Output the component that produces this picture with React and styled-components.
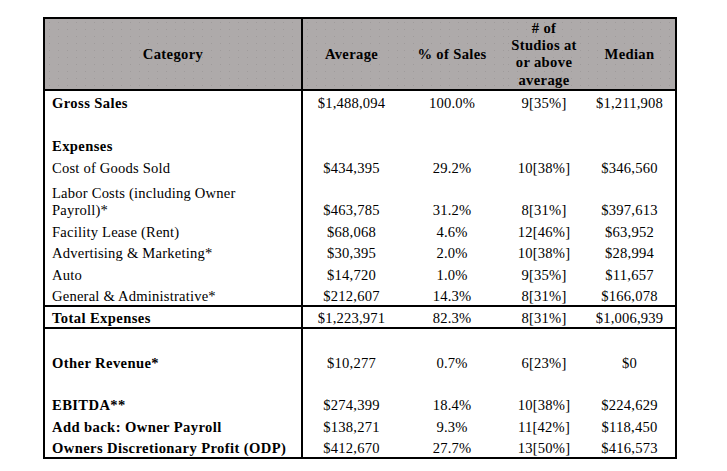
import styled, { createGlobalStyle } from "styled-components";

const GlobalStyle = createGlobalStyle`
  html, body {
    margin: 0;
    padding: 0;
    background: #ffffff;
  }
  body {
    font-family: "Liberation Serif", "Times New Roman", serif;
    color: #000000;
  }
`;

const Page = styled.div`
  width: 727px;
  height: 471px;
  padding: 17px 0 0 43px;
  box-sizing: border-box;
`;

const Table = styled.table`
  border-collapse: separate;
  border-spacing: 0;
  table-layout: fixed;
  width: 634px;
  border: 2px solid #000;
  font-size: 14.6px;
  line-height: 16.4px;
  letter-spacing: 0.2px;
`;

const HeadCell = styled.th`
  height: 68px;
  padding: 1px 0 0;
  line-height: 17.2px;
  letter-spacing: 0.35px;
  background-color: #aeaaaa;
  background-image: radial-gradient(
    circle,
    rgba(80, 76, 76, 0.16) 0.7px,
    transparent 1px
  );
  background-size: 9px 7px;
  border-bottom: 2px solid #000;
  border-right: ${(p) => (p.$divider ? "2px solid #000" : "none")};
  font-weight: bold;
  text-align: center;
  vertical-align: middle;
`;

const Row = styled.tr`
  height: ${(p) => p.$h}px;
`;

const Cell = styled.td`
  padding: 0;
  height: ${(p) => p.$h}px;
  vertical-align: bottom;
  text-align: center;
  white-space: nowrap;
  border-top: ${(p) => (p.$lineTop ? "2px solid #000" : "none")};
  border-bottom: ${(p) => (p.$lineBottom ? "2px solid #000" : "none")};
`;

const LabelCell = styled(Cell)`
  text-align: left;
  padding-left: 7px;
  border-right: 2px solid #000;
  font-weight: ${(p) => (p.$bold ? "bold" : "normal")};
  letter-spacing: ${(p) => (p.$bold ? "0.4px" : "0.2px")};
`;

const LabelLines = styled.span`
  display: block;
  line-height: 17.2px;
  margin-bottom: -0.4px;
`;

const rows = [
  { label: "Gross Sales", bold: true, h: 21, v: ["$1,488,094", "100.0%", "9[35%]", "$1,211,908"] },
  { h: 21 },
  { label: "Expenses", bold: true, h: 22 },
  { label: "Cost of Goods Sold", h: 22, v: ["$434,395", "29.2%", "10[38%]", "$346,560"] },
  { label: ["Labor Costs (including Owner", "Payroll)*"], h: 42, v: ["$463,785", "31.2%", "8[31%]", "$397,613"] },
  { label: "Facility Lease (Rent)", h: 22, v: ["$68,068", "4.6%", "12[46%]", "$63,952"] },
  { label: "Advertising & Marketing*", h: 21, v: ["$30,395", "2.0%", "10[38%]", "$28,994"] },
  { label: "Auto", h: 22, v: ["$14,720", "1.0%", "9[35%]", "$11,657"] },
  { label: "General & Administrative*", h: 21, v: ["$212,607", "14.3%", "8[31%]", "$166,078"] },
  { label: "Total Expenses", bold: true, h: 20, total: true, v: ["$1,223,971", "82.3%", "8[31%]", "$1,006,939"] },
  { h: 21 },
  { label: "Other Revenue*", bold: true, h: 22, v: ["$10,277", "0.7%", "6[23%]", "$0"] },
  { h: 21 },
  { label: "EBITDA**", bold: true, h: 21, v: ["$274,399", "18.4%", "10[38%]", "$224,629"] },
  { label: "Add back: Owner Payroll", bold: true, h: 22, v: ["$138,271", "9.3%", "11[42%]", "$118,450"] },
  { label: "Owners Discretionary Profit (ODP)", bold: true, h: 21, v: ["$412,670", "27.7%", "13[50%]", "$416,573"] },
];

const renderLabel = (label) => {
  if (!label) return null;
  if (Array.isArray(label)) {
    return (
      <LabelLines>
        {label.map((line, i) => (
          <span key={i}>
            {line}
            {i < label.length - 1 && <br />}
          </span>
        ))}
      </LabelLines>
    );
  }
  return label;
};

const App = () => {
  return (
    <Page>
      <GlobalStyle />
      <Table>
        <colgroup>
          <col style={{ width: 258 }} />
          <col style={{ width: 97 }} />
          <col style={{ width: 104 }} />
          <col style={{ width: 80 }} />
          <col style={{ width: 91 }} />
        </colgroup>
        <thead>
          <tr>
            <HeadCell $divider>Category</HeadCell>
            <HeadCell>Average</HeadCell>
            <HeadCell>% of Sales</HeadCell>
            <HeadCell>
              # of
              <br />
              Studios at
              <br />
              or above
              <br />
              average
            </HeadCell>
            <HeadCell>Median</HeadCell>
          </tr>
        </thead>
        <tbody>
          {rows.map((r, i) => (
            <Row key={i} $h={r.h}>
              <LabelCell $h={r.h} $bold={r.bold} $lineTop={r.total} $lineBottom={r.total}>
                {renderLabel(r.label)}
              </LabelCell>
              {[0, 1, 2, 3].map((c) => (
                <Cell key={c} $h={r.h} $lineTop={r.total} $lineBottom={r.total}>
                  {r.v ? r.v[c] : ""}
                </Cell>
              ))}
            </Row>
          ))}
        </tbody>
      </Table>
    </Page>
  );
};

export default App;
